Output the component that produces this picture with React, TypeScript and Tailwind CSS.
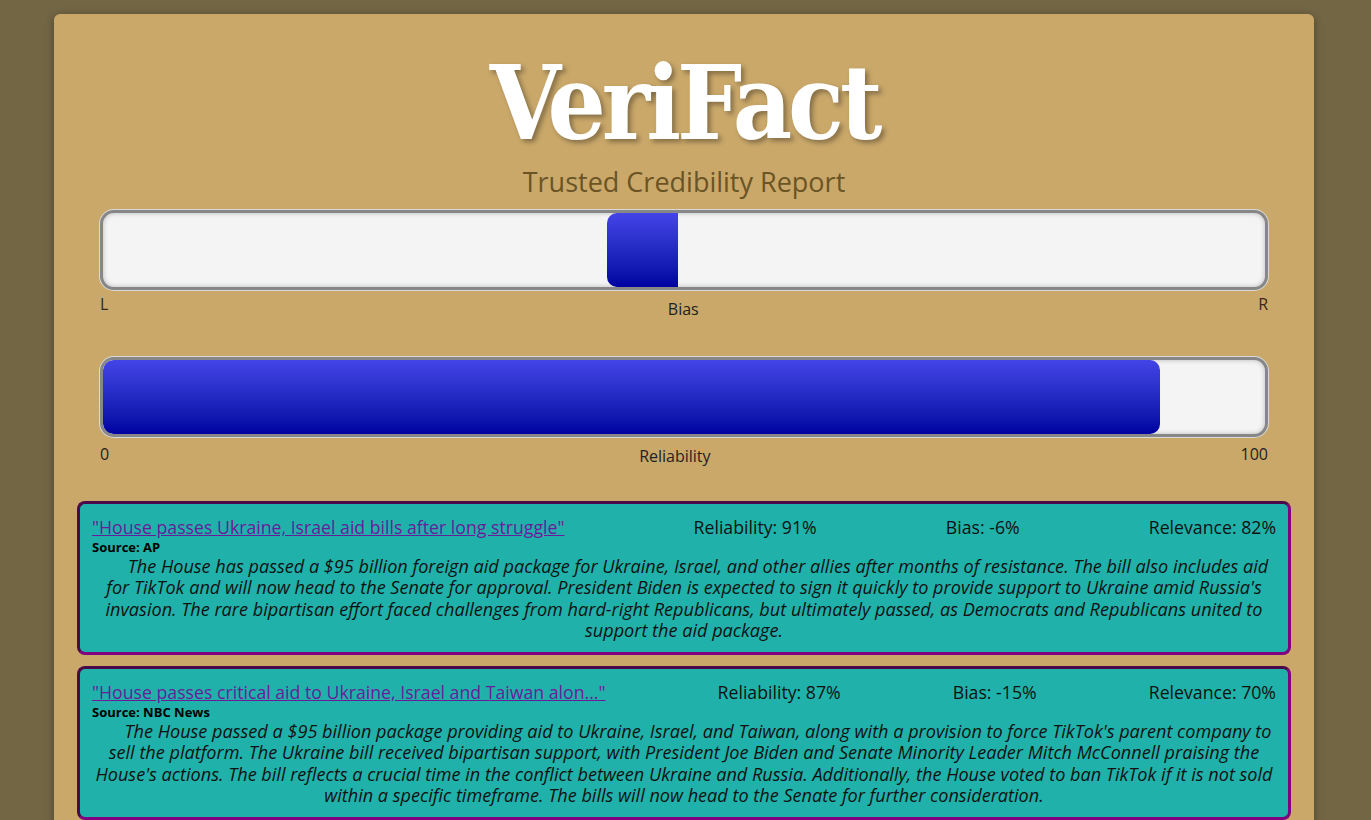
import React from 'react';

interface Article {
  id: number;
  title: string;
  source: string;
  reliability: number;
  bias: number;
  relevance: number;
  summary: string;
}

const articles: Article[] = [
  {
    id: 1,
    title: '"House passes Ukraine, Israel aid bills after long struggle"',
    source: 'AP',
    reliability: 91,
    bias: -6,
    relevance: 82,
    summary:
      "The House has passed a $95 billion foreign aid package for Ukraine, Israel, and other allies after months of resistance. The bill also includes aid for TikTok and will now head to the Senate for approval. President Biden is expected to sign it quickly to provide support to Ukraine amid Russia's invasion. The rare bipartisan effort faced challenges from hard-right Republicans, but ultimately passed, as Democrats and Republicans united to support the aid package.",
  },
  {
    id: 2,
    title: '"House passes critical aid to Ukraine, Israel and Taiwan alon..."',
    source: 'NBC News',
    reliability: 87,
    bias: -15,
    relevance: 70,
    summary:
      "The House passed a $95 billion package providing aid to Ukraine, Israel, and Taiwan, along with a provision to force TikTok's parent company to sell the platform. The Ukraine bill received bipartisan support, with President Joe Biden and Senate Minority Leader Mitch McConnell praising the House's actions. The bill reflects a crucial time in the conflict between Ukraine and Russia. Additionally, the House voted to ban TikTok if it is not sold within a specific timeframe. The bills will now head to the Senate for further consideration.",
  },
];

const fill = 'bg-gradient-to-b from-[#4444e6] to-[#0000a0]';

const Meter: React.FC<{ children: React.ReactNode }> = ({ children }) => (
  <div className="h-[80px] rounded-[14px] border-[3px] border-[#878787] bg-[#f4f4f4] shadow-[0_0_0_1px_#d9d9d9,inset_0_0_5px_rgba(0,0,0,0.25)] overflow-hidden flex">
    {children}
  </div>
);

const ArticleCard: React.FC<{ article: Article }> = ({ article }) => (
  <div className="rounded-[8px] border-[3px] border-[#800080] border-t-[#4a0a4a] border-l-[#4a0a4a] bg-[#20b2aa] px-[12px] pt-[12px] pb-[11px]">
    <div className="flex justify-between items-center text-[17.7px] leading-[22px] text-[#111]">
      <a href="#" className="text-[#6a1b9a] underline">{article.title}</a>
      <span>Reliability: {article.reliability}%</span>
      <span>Bias: {article.bias}%</span>
      <span>Relevance: {article.relevance}%</span>
    </div>
    <p className="text-[13px] font-bold leading-[16px] mt-[1px] text-black">Source: {article.source}</p>
    <p className="italic text-[18.1px] leading-[21.3px] mt-[1px] text-center indent-[28px] text-[#111]">
      {article.summary}
    </p>
  </div>
);

export default function App() {
  return (
    <div className="min-h-screen bg-[#736645] pt-[14px] pl-[54px] font-['Open_Sans',sans-serif]">
      <div className="w-[1260px] rounded-[6px] bg-[#caa86a] shadow-[0_2px_8px_rgba(0,0,0,0.35)] px-[23px] pb-[20px]">
        <h1 className="pt-[28px] text-center font-['DejaVu_Serif_Condensed','DejaVu_Serif',serif] font-bold text-[102px] leading-[122px] tracking-[-4px] text-white [text-shadow:3px_3px_5px_rgba(0,0,0,0.35)]">
          VeriFact
        </h1>
        <h2 className="mt-[3px] text-center text-[27px] font-medium leading-[30px] text-[#6b5424]">
          Trusted Credibility Report
        </h2>

        <div className="mx-[23px] mt-[13px]">
          <Meter>
            <div className={`ml-[43.4%] w-[6.1%] h-full rounded-l-[10px] ${fill}`} />
          </Meter>
          <div className="flex justify-between items-start text-[16px] leading-[20px] text-[#222] mt-[4px]">
            <span className="text-[#3b2a10]">L</span>
            <span className="mt-[5px]">Bias</span>
            <span className="text-[#3b2a10]">R</span>
          </div>
        </div>

        <div className="mx-[23px] mt-[38px]">
          <Meter>
            <div className={`w-[91%] h-full rounded-[10px] ${fill}`} />
          </Meter>
          <div className="flex justify-between items-start text-[16px] leading-[20px] text-[#222] mt-[7px]">
            <span>0</span>
            <span className="mt-[2px]">Reliability</span>
            <span>100</span>
          </div>
        </div>

        <div className="mt-[35px] flex flex-col gap-[11px]">
          {articles.map((a) => (
            <ArticleCard key={a.id} article={a} />
          ))}
        </div>
      </div>
    </div>
  );
}
